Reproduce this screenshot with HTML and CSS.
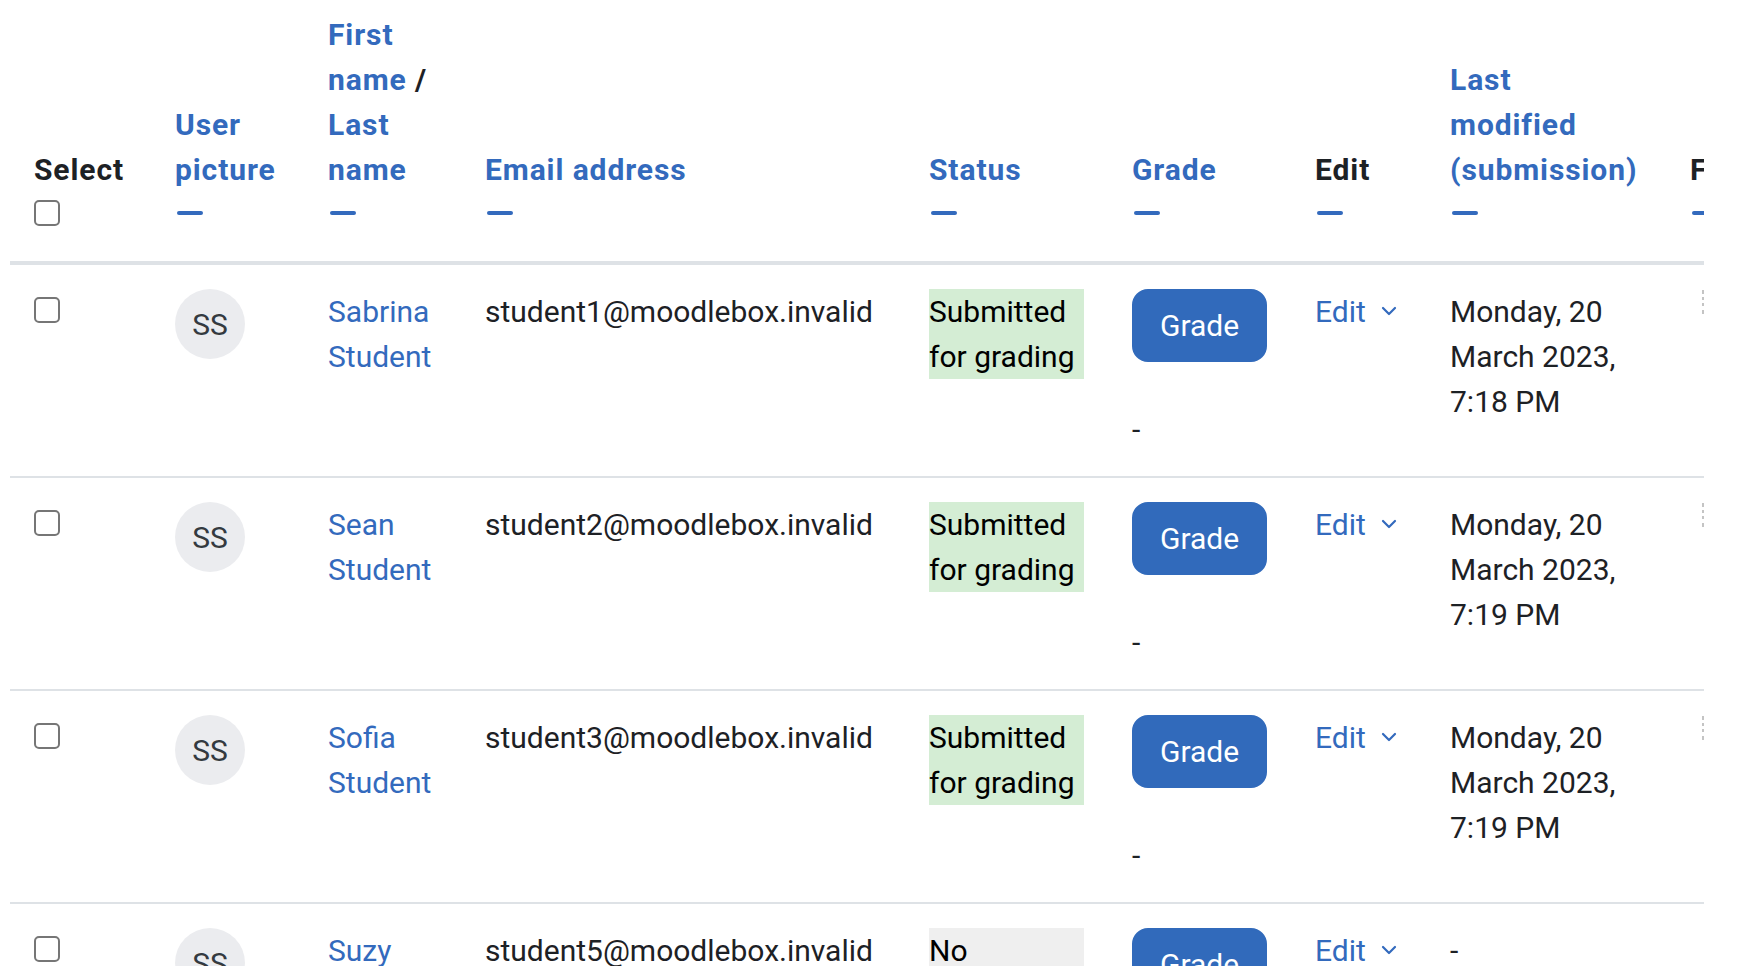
FILE: index.html
```html
<!DOCTYPE html>
<html lang="en">
<head>
    <meta charset="UTF-8">
    <meta name="viewport" content="width=device-width, initial-scale=1.0">
    <title>Submissions</title>
    <link rel="stylesheet" href="styles.css">
</head>
<body>
    <div class="table-wrap">
        <table class="submissions">
            <colgroup>
                <col class="col-select">
                <col class="col-picture">
                <col class="col-name">
                <col class="col-email">
                <col class="col-status">
                <col class="col-grade">
                <col class="col-edit">
                <col class="col-modified">
                <col class="col-files">
            </colgroup>
            <thead>
                <tr>
                    <th>Select<div class="th-tools"><input type="checkbox" class="check check-head"></div></th>
                    <th><a href="#">User picture</a><div class="th-tools"><span class="collapse-icon"></span></div></th>
                    <th><a href="#">First name</a> / <a href="#">Last name</a><div class="th-tools"><span class="collapse-icon"></span></div></th>
                    <th><a href="#">Email address</a><div class="th-tools"><span class="collapse-icon"></span></div></th>
                    <th><a href="#">Status</a><div class="th-tools"><span class="collapse-icon"></span></div></th>
                    <th><a href="#">Grade</a><div class="th-tools"><span class="collapse-icon"></span></div></th>
                    <th>Edit<div class="th-tools"><span class="collapse-icon"></span></div></th>
                    <th><a href="#">Last modified (submission)</a><div class="th-tools"><span class="collapse-icon"></span></div></th>
                    <th>File submissions<div class="th-tools"><span class="collapse-icon"></span></div></th>
                </tr>
            </thead>
            <tbody>
                <tr>
                    <td><input type="checkbox" class="check"></td>
                    <td><span class="userinitials">SS</span></td>
                    <td><a href="#">Sabrina Student</a></td>
                    <td>student1@moodlebox.invalid</td>
                    <td><div class="status submitted">Submitted for grading</div></td>
                    <td><a href="#" class="btn-grade">Grade</a><div class="grade-value">-</div></td>
                    <td><a href="#" class="edit-menu">Edit<svg class="chevron" width="16" height="10" viewBox="0 0 16 10"><polyline points="2,2 8,8 14,2" fill="none" stroke="currentColor" stroke-width="2.2" stroke-linecap="round" stroke-linejoin="round"/></svg></a></td>
                    <td>Monday, 20 March 2023, 7:18 PM</td>
                    <td><span class="file-edge"></span></td>
                </tr>
                <tr>
                    <td><input type="checkbox" class="check"></td>
                    <td><span class="userinitials">SS</span></td>
                    <td><a href="#">Sean Student</a></td>
                    <td>student2@moodlebox.invalid</td>
                    <td><div class="status submitted">Submitted for grading</div></td>
                    <td><a href="#" class="btn-grade">Grade</a><div class="grade-value">-</div></td>
                    <td><a href="#" class="edit-menu">Edit<svg class="chevron" width="16" height="10" viewBox="0 0 16 10"><polyline points="2,2 8,8 14,2" fill="none" stroke="currentColor" stroke-width="2.2" stroke-linecap="round" stroke-linejoin="round"/></svg></a></td>
                    <td>Monday, 20 March 2023, 7:19 PM</td>
                    <td><span class="file-edge"></span></td>
                </tr>
                <tr>
                    <td><input type="checkbox" class="check"></td>
                    <td><span class="userinitials">SS</span></td>
                    <td><a href="#">Sofia Student</a></td>
                    <td>student3@moodlebox.invalid</td>
                    <td><div class="status submitted">Submitted for grading</div></td>
                    <td><a href="#" class="btn-grade">Grade</a><div class="grade-value">-</div></td>
                    <td><a href="#" class="edit-menu">Edit<svg class="chevron" width="16" height="10" viewBox="0 0 16 10"><polyline points="2,2 8,8 14,2" fill="none" stroke="currentColor" stroke-width="2.2" stroke-linecap="round" stroke-linejoin="round"/></svg></a></td>
                    <td>Monday, 20 March 2023, 7:19 PM</td>
                    <td><span class="file-edge"></span></td>
                </tr>
                <tr>
                    <td><input type="checkbox" class="check"></td>
                    <td><span class="userinitials">SS</span></td>
                    <td><a href="#">Suzy Student</a></td>
                    <td>student5@moodlebox.invalid</td>
                    <td><div class="status nosubmission">No submission</div></td>
                    <td><a href="#" class="btn-grade">Grade</a><div class="grade-value">-</div></td>
                    <td><a href="#" class="edit-menu">Edit<svg class="chevron" width="16" height="10" viewBox="0 0 16 10"><polyline points="2,2 8,8 14,2" fill="none" stroke="currentColor" stroke-width="2.2" stroke-linecap="round" stroke-linejoin="round"/></svg></a></td>
                    <td>-</td>
                    <td></td>
                </tr>
            </tbody>
        </table>
    </div>
</body>
</html>
```

FILE: styles.css
```css
body {
    margin: 0;
    padding: 0;
    font-family: 'Roboto', 'Liberation Sans', sans-serif;
    font-size: 30px;
    line-height: 45px;
    color: #1d2125;
    background: #fff;
    overflow: hidden;
}

a {
    color: #336abd;
    text-decoration: none;
}

.table-wrap {
    margin-left: 10px;
    width: 1694px;
    overflow: hidden;
}

.submissions {
    border-collapse: separate;
    border-spacing: 0;
    table-layout: fixed;
    width: 1996px;
}

.col-select { width: 141px; }
.col-picture { width: 153px; }
.col-name { width: 157px; }
.col-email { width: 444px; }
.col-status { width: 203px; }
.col-grade { width: 183px; }
.col-edit { width: 135px; }
.col-modified { width: 240px; }
.col-files { width: 340px; }

.submissions th {
    text-align: left;
    vertical-align: bottom;
    font-weight: 700;
    letter-spacing: 0.9px;
    padding: 12px 24px 24px 24px;
    border-bottom: 4px solid #dee2e6;
}

.submissions td {
    vertical-align: top;
    padding: 24px;
    border-bottom: 2px solid #dee2e6;
}

.th-tools {
    display: flow-root;
    height: 45px;
}

.collapse-icon {
    display: block;
    width: 26px;
    height: 4px;
    margin: 19px 0 0 2px;
    border-radius: 2px;
    background: #336abd;
}

.check {
    -webkit-appearance: none;
    appearance: none;
    display: block;
    width: 26px;
    height: 26px;
    margin: 8px 0 0 0;
    border: 2px solid #767676;
    border-radius: 5px;
    background: #fff;
    box-sizing: border-box;
}

.userinitials {
    display: flex;
    align-items: center;
    justify-content: center;
    width: 70px;
    height: 70px;
    border-radius: 50%;
    background: #ebecef;
    color: #343a40;
    font-size: 30px;
}

.status {
    color: #000;
}

.status.submitted {
    background: #d4edd4;
}

.status.nosubmission {
    background: #efefef;
}

.btn-grade {
    display: inline-block;
    padding: 12px 26px;
    border: 2px solid #316abb;
    border-radius: 16px;
    background: #316abb;
    color: #fff;
}

.grade-value {
    margin-top: 45px;
}

.edit-menu {
    white-space: nowrap;
}

.chevron {
    margin-left: 15px;
    vertical-align: 6px;
}

.file-edge {
    display: block;
    width: 0;
    height: 24px;
    margin: 1px 0 0 12px;
    border-left: 3px dotted #c4c4c4;
}
```
